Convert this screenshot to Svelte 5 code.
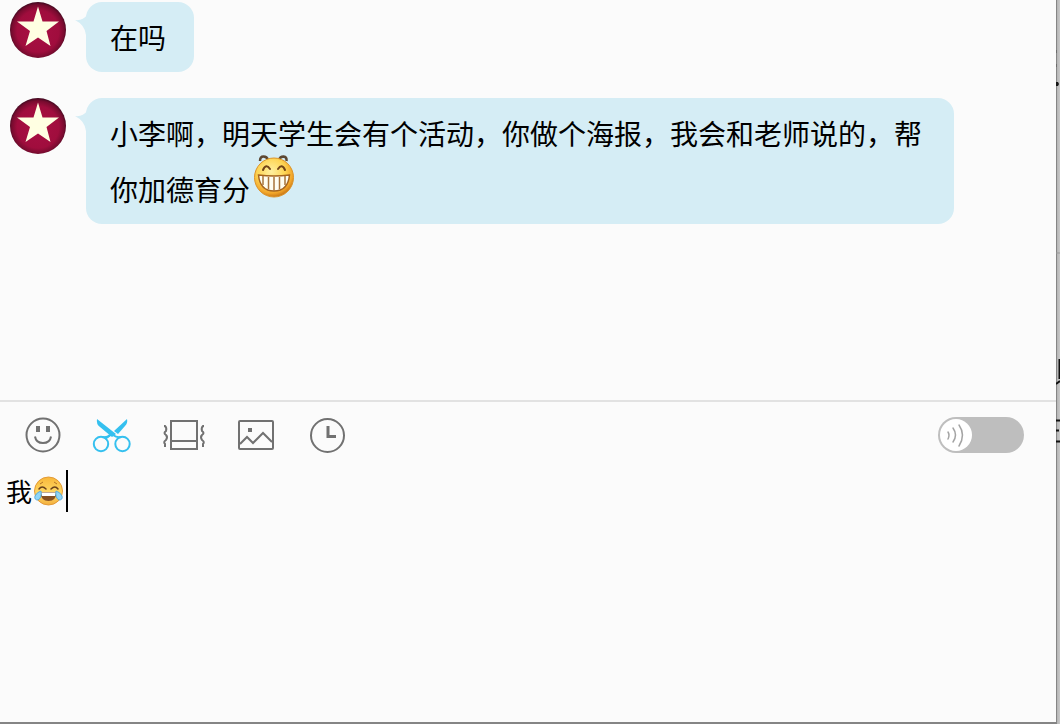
<script>
  let draft = $state('我');
  let voice = $state(false);
  const messages = [
    { text: '在吗', grin: false },
    { text: '小李啊，明天学生会有个活动，你做个海报，我会和老师说的，帮你加德育分', grin: true }
  ];
</script>

<svelte:head><title>聊天</title></svelte:head>

<div class="desktop">
  <main class="window">
    <section class="chat" aria-label="聊天记录">
      {#each messages as m}
        <article class="message">
          <svg class="avatar" viewBox="0 0 56 56" aria-hidden="true">
            <defs>
              <radialGradient id="ruby" cx="50%" cy="52%" r="52%">
                <stop offset="0" stop-color="#a80f43" />
                <stop offset=".72" stop-color="#a00d3d" />
                <stop offset=".9" stop-color="#780b2f" />
                <stop offset="1" stop-color="#3f0a20" />
              </radialGradient>
            </defs>
            <circle cx="28" cy="28" r="28" fill="url(#ruby)" />
            <path d="M28 4.500 32.500 19.500H49L36.500 29 40.500 44 28 35.500 15.500 44 20 29 7 19.500H23.500Z" fill="#ffffe2" />
          </svg>
          <div class="bubble">
            <svg class="tail" viewBox="0 0 14 20" aria-hidden="true">
              <path d="M1 5Q9 6 13 0H14V20H12Q11 10 1 5Z" fill="#d5edf5" />
            </svg>
            <p>{m.text}{#if m.grin}<svg class="grin" viewBox="0 0 42 43" role="img" aria-label="呲牙">
              <defs>
                <radialGradient id="gold" cx="43%" cy="35%" r="65%">
                  <stop offset="0" stop-color="#fff0a0" />
                  <stop offset=".55" stop-color="#fdd453" />
                  <stop offset=".85" stop-color="#f2a62a" />
                  <stop offset="1" stop-color="#cc7a18" />
                </radialGradient>
              </defs>
              <path d="M7 6Q7 1.500 10.500 1.500Q14 1.500 15 5M26 5Q27 1.500 30.500 1.500Q34 2 33.500 6" fill="none" stroke="#5c4833" stroke-width="2.500" />
              <circle cx="21" cy="22.500" r="19.500" fill="url(#gold)" stroke="#dc9429" />
              <path d="M10 15Q13 8 17 14M25 14Q29 8 32 15" fill="none" stroke="#714317" stroke-width="2" stroke-linecap="round" />
              <path d="M5.500 20Q21 22 36.500 20Q35 36 21 36Q7 36 5.500 20Z" fill="#fffdf0" stroke="#a5641f" stroke-width="1.500" />
              <path d="M10 21V30M15.500 22V34M21 22V36M26.500 22V34M32 21V30" stroke="#a87339" stroke-width="1.500" />
            </svg>{/if}</p>
          </div>
        </article>
      {/each}
    </section>

    <section class="composer" aria-label="输入消息">
      <div class="toolbar">
        <button type="button" aria-label="表情">
          <svg viewBox="0 0 44 44" fill="none" stroke="#717171" stroke-width="2">
            <circle cx="25" cy="22" r="16.500" />
            <path d="M17 23.500Q18 30 25 30Q32 30 33 23.500" />
            <path d="M18 13h4v6h-4zM28 13h4v6h-4z" fill="#717171" stroke="none" />
          </svg>
        </button>
        <button type="button" aria-label="截图">
          <svg viewBox="0 0 44 44" fill="none" stroke="#35c0ef" stroke-width="2">
            <circle cx="11" cy="31" r="7.200" /><circle cx="32.500" cy="31" r="7.200" />
            <path d="M12 24Q17 25 20 22M31 24Q27 25 23 22" />
            <path d="M7 6Q6 11 10 14L22 24 26 21Z" fill="#35c0ef" stroke="none" />
            <path d="M37 6Q38 10 35 13L28 21 24 18Z" fill="#35c0ef" stroke="none" />
            <path d="M22 21 15 26" />
          </svg>
        </button>
        <button type="button" aria-label="窗口抖动">
          <svg viewBox="0 0 44 44" fill="none" stroke="#717171" stroke-width="2">
            <path d="M9 8V36M35 8V36" />
            <path d="M8 8H36M8 36H36" stroke-width="2" />
            <path d="M9 28H35" />
            <path d="M2 13H3Q5 15 4 18Q1 20 4 22Q6 24 4 27Q1 29 3 31V34M42 13H41Q39 15 40 18Q43 20 40 22Q38 24 40 27Q43 29 41 31V34" />
          </svg>
        </button>
        <button type="button" aria-label="图片">
          <svg viewBox="0 0 44 44" fill="none" stroke="#717171" stroke-width="2">
            <rect x="5" y="8" width="34" height="28" rx="1" />
            <path d="M6 31 13 24 19 30 29 20 38 29" />
            <path d="M14 15h4v4h-4z" fill="#717171" stroke="none" />
          </svg>
        </button>
        <button type="button" aria-label="消息记录">
          <svg viewBox="0 0 44 44" fill="none" stroke="#717171" stroke-width="2">
            <circle cx="21.500" cy="22.500" r="16.500" />
            <path d="M22 13V23.500H30" stroke-width="3" />
          </svg>
        </button>
        <label class="switch">
          <input type="checkbox" aria-label="语音" bind:checked={voice} />
          <span class="knob">
            <svg viewBox="0 0 32 32" fill="none" stroke="#a4a4a4" stroke-width="1.500" stroke-linecap="round" aria-hidden="true">
              <path d="M8 13Q10 16 8 20M13 9Q18 16 13 23M19 6Q26 16 19 27" />
            </svg>
          </span>
        </label>
      </div>
      <div class="editor">
        <textarea aria-label="消息内容" bind:value={draft}></textarea>
        <div class="inserted" aria-hidden="true">
          <svg class="joy" viewBox="0 0 32 32">
            <defs>
              <linearGradient id="joyface" x2="0" y2="1">
                <stop offset="0" stop-color="#f8b739" />
                <stop offset=".6" stop-color="#ffda68" />
                <stop offset="1" stop-color="#f3ae3c" />
              </linearGradient>
            </defs>
            <circle cx="15.500" cy="16" r="14" fill="url(#joyface)" stroke="#e39a38" />
            <path d="M7 9 10 7M21 7 24 9" stroke="#b37325" />
            <path d="M6 14Q9 10 13 14M18 14Q22 10 25 14" fill="none" stroke="#68401b" stroke-width="1.500" stroke-linecap="round" />
            <path d="M7 17H24Q23 26 15.500 26Q8 26 7 17Z" fill="#855022" />
            <path d="M8 17.500H23L22 21H9Z" fill="#fff" />
            <path d="M8 16Q9 23 5 25Q1 25 2 21Q4 17 8 16ZM23 16Q22 23 26 25Q30 25 29 21Q27 17 23 16Z" fill="#8fd5f7" stroke="#5aabda" />
          </svg>
          <span class="caret"></span>
        </div>
      </div>
    </section>
  </main>

  <div class="behind" aria-hidden="true">
    <svg viewBox="0 0 4 724" preserveAspectRatio="xMinYMin slice" fill="none">
      <path d="M0 50V53M0 64V67" stroke="#555" />
      <path d="M0 82H2L3 84 2 86H0Z" fill="#151515" />
      <path d="M0 253H4" stroke="#999" />
      <path d="M3.500 359V379M0 384 4 381M0 420.500H4M0 430.500H3M0 441.500H4" stroke="#111" stroke-width="2" />
    </svg>
  </div>
</div>

<style>
  :global(body) {
    margin: 0;
    background: #fbfbfb;
  }
  .desktop {
    display: flex;
    height: 100vh;
    overflow: hidden;
    color: #000;
    font-family: "Noto Sans CJK SC", sans-serif;
  }
  .window {
    display: flex;
    flex: 1;
    flex-direction: column;
    min-width: 0;
    box-sizing: border-box;
    background: #fbfbfb;
    border-bottom: 2px solid #858585;
  }
  .chat {
    display: flex;
    flex: 56 1 0;
    flex-direction: column;
    gap: 26px;
    box-sizing: border-box;
    min-height: 0;
    padding: 2px 102px 0 10px;
    overflow: hidden;
  }
  .message {
    display: flex;
    align-items: flex-start;
    gap: 20px;
  }
  .avatar {
    flex: none;
    width: 56px;
    height: 56px;
  }
  .bubble {
    position: relative;
    padding: 7px 28px 7px 24px;
    background: #d5edf5;
    border-radius: 16px;
  }
  .tail {
    position: absolute;
    top: 13px;
    left: -12px;
    width: 14px;
    height: 20px;
  }
  p {
    margin: 0;
    font-size: 28px;
    line-height: 56px;
  }
  .grin {
    width: 42px;
    height: 43px;
    margin: -12px 0 0 3px;
    vertical-align: 3px;
  }
  .composer {
    display: flex;
    flex: 45 1 0;
    flex-direction: column;
    min-height: 0;
    border-top: 2px solid #e2e2e2;
  }
  .toolbar {
    display: flex;
    align-items: center;
    gap: 28px;
    padding: 11px 32px 11px 18px;
  }
  button {
    width: 44px;
    height: 44px;
    padding: 0;
    background: none;
    border: 0;
    cursor: pointer;
  }
  button svg {
    display: block;
    width: 44px;
    height: 44px;
  }
  .switch {
    display: flex;
    box-sizing: border-box;
    width: 86px;
    height: 36px;
    margin-left: auto;
    padding: 2px;
    background: #bebebe;
    border-radius: 18px;
    cursor: pointer;
  }
  .switch input {
    width: 0;
    height: 0;
    margin: 0;
    appearance: none;
  }
  .switch:has(input:checked) {
    justify-content: flex-end;
    background: #35c0ef;
  }
  .knob {
    width: 32px;
    height: 32px;
    background: #fff;
    border-radius: 50%;
  }
  .knob svg {
    display: block;
  }
  .editor {
    position: relative;
    display: flex;
    flex: 1;
    min-height: 0;
  }
  textarea {
    flex: 1;
    padding: 2px 6px;
    color: inherit;
    font: 26px/42px "Noto Sans CJK SC", sans-serif;
    background: none;
    border: 0;
    outline: 0;
    resize: none;
  }
  .inserted {
    position: absolute;
    top: 2px;
    left: 33px;
    display: flex;
    align-items: center;
    gap: 1px;
    pointer-events: none;
  }
  .joy {
    width: 32px;
    height: 32px;
  }
  .caret {
    width: 2px;
    height: 42px;
    background: #000;
  }
  .behind {
    flex: none;
    width: 4px;
    background: linear-gradient(90deg, #858585 1px, #b5b5b5 1px, #c8c8c8);
  }
  .behind svg {
    display: block;
    width: 4px;
    height: 724px;
  }
</style>
